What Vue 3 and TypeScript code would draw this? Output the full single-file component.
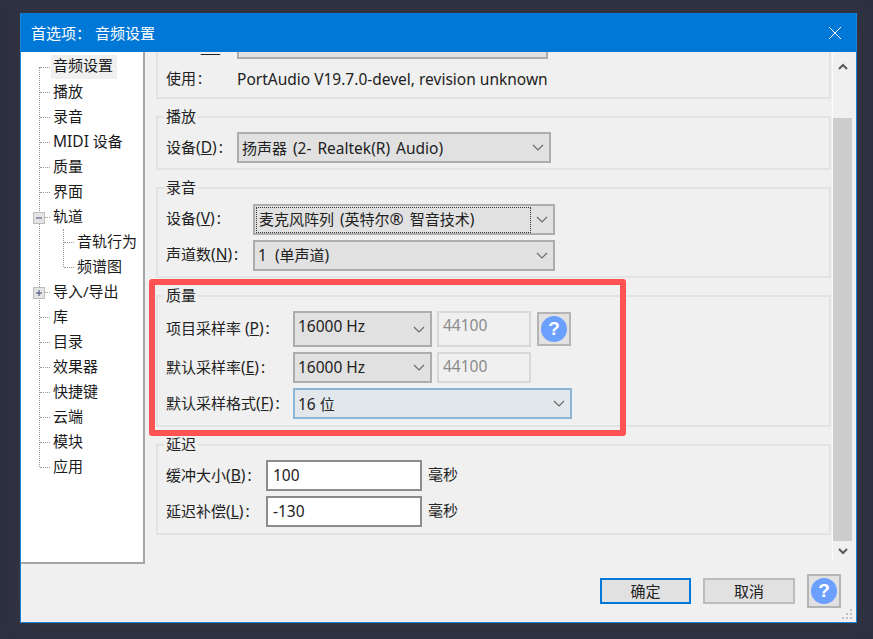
<script setup lang="ts">
interface TreeItem { label: string; level: number; expander?: string; selected?: boolean; latin?: boolean }
const items: TreeItem[] = [
  { label: '音频设置', level: 0, selected: true },
  { label: '播放', level: 0 },
  { label: '录音', level: 0 },
  { label: 'MIDI', level: 0, latin: true },
  { label: '质量', level: 0 },
  { label: '界面', level: 0 },
  { label: '轨道', level: 0, expander: 'minus' },
  { label: '音轨行为', level: 1 },
  { label: '频谱图', level: 1 },
  { label: '导入/导出', level: 0, expander: 'plus' },
  { label: '库', level: 0 },
  { label: '目录', level: 0 },
  { label: '效果器', level: 0 },
  { label: '快捷键', level: 0 },
  { label: '云端', level: 0 },
  { label: '模块', level: 0 },
  { label: '应用', level: 0 },
]
</script>

<template>
  <div class="page">
    <div class="window">
      <header class="titlebar">
        <span>首选项：&nbsp;音频设置</span>
        <svg class="close" width="14" height="14" viewBox="0 0 14 14"><path d="M1 1 13 13M13 1 1 13" stroke="#fff" stroke-width="1" fill="none" /></svg>
      </header>
      <div class="body">
        <nav class="tree">
          <i class="vline"></i>
          <i class="vline sub"></i>
          <div v-for="item in items" :key="item.label" class="row" :class="'lv' + item.level">
            <i class="hline"></i>
            <span v-if="item.expander" class="exp">
              <svg width="12" height="12" viewBox="0 0 12 12"><path :d="item.expander === 'plus' ? 'M3 6H9M6 3V9' : 'M3 6H9'" stroke="#3c4a7a" fill="none" /></svg>
            </span>
            <span class="lbl" :class="{ sel: item.selected }"><template v-if="item.latin"><span class="lat">{{ item.label }}</span>&nbsp;设备</template><template v-else>{{ item.label }}</template></span>
          </div>
        </nav>
        <div class="scrollview">
          <section class="group g1">
            <div class="line line-host">
              <label class="l1 host">主机<span class="lat">(<u>&nbsp;H&nbsp;</u>):</span></label>
              <div class="combo w311"></div>
            </div>
            <div class="line use">
              <label class="l1">使用<span class="lat colon">:</span></label>
              <span class="lat">PortAudio V19.7.0-devel, revision unknown</span>
            </div>
          </section>
          <section class="group g2">
            <span class="legend">播放</span>
            <div class="line">
              <label class="l1">设备<span class="lat">(<u>D</u>)<span class="colon">:</span></span></label>
              <div class="combo w314"><span class="ws">扬声器 <span class="lat">(2- Realtek(R) Audio)</span></span>
                <svg class="chev" width="12" height="7" viewBox="0 0 12 7"><path d="M1 1 6 6 11 1" /></svg>
              </div>
            </div>
          </section>
          <section class="group g3">
            <span class="legend">录音</span>
            <div class="line">
              <label class="l2">设备<span class="lat">(<u>V</u>)<span class="colon">:</span></span></label>
              <div class="combo w302 focus"><span class="focusbox ws">麦克风阵列 <span class="lat">(</span>英特尔<span class="mark">®</span> 智音技术<span class="lat">)</span></span>
                <svg class="chev" width="12" height="7" viewBox="0 0 12 7"><path d="M1 1 6 6 11 1" /></svg>
              </div>
            </div>
            <div class="line mt5">
              <label class="l2">声道数<span class="lat">(<u>N</u>)<span class="colon">:</span></span></label>
              <div class="combo w302"><span><span class="lat">1&nbsp; (</span>单声道<span class="lat">)</span></span>
                <svg class="chev" width="12" height="7" viewBox="0 0 12 7"><path d="M1 1 6 6 11 1" /></svg>
              </div>
            </div>
          </section>
          <section class="group g4">
            <span class="legend">质量</span>
            <div class="line">
              <label class="l3">项目采样率 <span class="lat">(<u>P</u>)<span class="colon">:</span></span></label>
              <div class="combo w139 tall"><span class="lat">16000 Hz</span>
                <svg class="chev" width="12" height="7" viewBox="0 0 12 7"><path d="M1 1 6 6 11 1" /></svg>
              </div>
              <div class="field disabled tall lat">44100</div>
              <button class="helpbtn small">
                <svg width="28" height="28" viewBox="0 0 28 28"><circle cx="14" cy="14" r="13" fill="#6ca0ff" /><text x="14" y="20" text-anchor="middle" class="q">?</text></svg>
              </button>
            </div>
            <div class="line mt5">
              <label class="l3">默认采样率<span class="lat">(<u>E</u>)<span class="colon">:</span></span></label>
              <div class="combo w139 up"><span class="lat">16000 Hz</span>
                <svg class="chev" width="12" height="7" viewBox="0 0 12 7"><path d="M1 1 6 6 11 1" /></svg>
              </div>
              <div class="field disabled lat">44100</div>
            </div>
            <div class="line mt5">
              <label class="l3">默认采样格式<span class="lat">(<u>F</u>)<span class="colon">:</span></span></label>
              <div class="combo w279 hover"><span><span class="lat">16</span> 位</span>
                <svg class="chev" width="12" height="7" viewBox="0 0 12 7"><path d="M1 1 6 6 11 1" /></svg>
              </div>
            </div>
          </section>
          <section class="group g5">
            <span class="legend">延迟</span>
            <div class="line">
              <label class="l4">缓冲大小<span class="lat">(<u>B</u>)<span class="colon">:</span></span></label>
              <div class="field input lat">100</div>
              <span class="unit">毫秒</span>
            </div>
            <div class="line mt5">
              <label class="l4">延迟补偿<span class="lat">(<u>L</u>)<span class="colon">:</span></span></label>
              <div class="field input lat">-130</div>
              <span class="unit">毫秒</span>
            </div>
          </section>
        </div>
        <aside class="scrollbar">
          <svg class="arrow" width="10" height="7" viewBox="0 0 10 7"><path d="M1 6 5 2 9 6" /></svg>
          <div class="thumb"></div>
          <svg class="arrow" width="10" height="7" viewBox="0 0 10 7"><path d="M1 1 5 5 9 1" /></svg>
        </aside>
      </div>
      <footer class="footer">
        <button class="btn primary">确定</button>
        <button class="btn">取消</button>
        <button class="helpbtn">
          <svg width="28" height="28" viewBox="0 0 28 28"><circle cx="14" cy="14" r="13" fill="#6ca0ff" /><text x="14" y="20" text-anchor="middle" class="q">?</text></svg>
        </button>
        <svg class="grip" width="11" height="11" viewBox="0 0 11 11"><path d="M8 0h2v2H8zM4 4h2v2H4zM8 4h2v2H8zM0 8h2v2H0zM4 8h2v2H4zM8 8h2v2H8z" fill="#c4c4c4" /></svg>
      </footer>
    </div>
    <div class="highlight"></div>
  </div>
</template>

<style>
html, body { margin: 0; background: #2e3140; overflow: hidden; }
</style>

<style scoped>
.page {
  position: relative;
  width: 873px;
  height: 639px;
  box-sizing: border-box;
  padding: 13px 16px 16px 20px;
  background: #2e3140;
  font-family: "Noto Sans", "Noto Sans CJK SC", sans-serif;
  font-size: 15px;
  color: #222;
}
.lat { font-size: 15.5px; }
.mark { font-size: 17px; }
.ws { word-spacing: 2px; }
.colon { margin-left: 2px; }
.window {
  position: relative;
  width: 837px;
  height: 610px;
  box-sizing: border-box;
  border: 1px solid #1a85d8;
  border-top: 0;
  background: #f0f0f0;
  display: flex;
  flex-direction: column;
  box-shadow: 0 0 16px rgba(60, 60, 70, 0.5);
}
.titlebar {
  height: 39px;
  flex: none;
  background: #0078d7;
  color: #fff;
  display: flex;
  align-items: center;
  justify-content: space-between;
  padding: 0 14px 0 10px;
}
.close { display: block; }
.body { display: flex; height: 510px; flex: none; }
.tree {
  position: relative;
  width: 124px;
  height: 512px;
  flex: none;
  box-sizing: border-box;
  background: #fff;
  border-right: 2px solid #a6a6a6;
  border-bottom: 2px solid #a6a6a6;
  padding-top: 1px;
  color: #1a1a1a;
}
.vline { position: absolute; left: 18px; top: 15px; height: 400px; border-left: 1px dotted #999; }
.vline.sub { left: 42px; top: 177px; height: 38px; }
.row { position: relative; height: 25px; display: flex; align-items: center; }
.row.lv0 { padding-left: 30px; }
.row.lv1 { padding-left: 54px; }
.hline { position: absolute; top: 14px; width: 10px; border-top: 1px dotted #999; }
.lv0 .hline { left: 19px; }
.lv1 .hline { left: 43px; }
.exp {
  position: absolute;
  left: 12px;
  top: 9px;
  width: 12px;
  height: 12px;
  background: #e4e4e4;
  box-shadow: inset 0 0 0 1px #bcbcbc;
  display: block;
}
.exp svg { display: block; }
.lbl { padding: 0 4px 0 2px; line-height: 24px; }
.lbl.sel { background: #f0f0f0; line-height: 21px; padding-bottom: 3px; margin-top: 3px; }
.scrollview {
  width: 687px;
  height: 510px;
  flex: none;
  overflow: hidden;
  box-sizing: border-box;
  padding-left: 11px;
}
.group {
  position: relative;
  width: 675px;
  box-sizing: border-box;
  border: 2px solid #e3e3e3;
  padding-left: 8px;
}
.legend {
  position: absolute;
  left: 6px;
  top: -12px;
  padding: 0 2px;
  line-height: 20px;
  background: #f0f0f0;
}
.g1 { margin-top: -31px; height: 78px; }
.line-host { height: 41px; align-items: flex-end; }
.l1.host { align-self: flex-end; padding-bottom: 13px; }
.l1.host u { text-underline-offset: 8px; }
.g2 { margin-top: 17px; height: 54px; padding-top: 14px; }
.g3 { margin-top: 17px; height: 91px; padding-top: 15px; }
.g4 { margin-top: 17px; height: 132px; padding-top: 14px; }
.g5 { margin-top: 17px; height: 91px; padding-top: 14px; }
.line { display: flex; align-items: center; }
.use { height: 30px; }
.mt5 { margin-top: 5px; }
label { flex: none; padding-bottom: 2px; box-sizing: border-box; }
.g3 label { padding-bottom: 4px; }
.l1 { width: 71px; }
.l2 { width: 87px; }
.l3 { width: 127px; }
.l4 { width: 100px; }
u { text-underline-offset: 1px; }
.combo {
  box-sizing: border-box;
  height: 31px;
  border: 2px solid #adadad;
  background: #e1e1e1;
  display: flex;
  align-items: center;
  justify-content: space-between;
  padding: 0 3px 0 3px;
  flex: none;
  color: #222;
}
.g3 .combo > span { padding-bottom: 2px; }
.combo.up > span { padding-bottom: 2px; }
.combo.tall { height: 36px; }
.combo.tall > span { padding-bottom: 6px; }
.w311 { width: 311px; }
.w314 { width: 314px; }
.w302 { width: 302px; }
.w139 { width: 139px; }
.w279 { width: 279px; }
.combo.hover { background: #e2e7ec; border-color: #8cb4d4; }
.combo.focus { padding-left: 2px; }
.g3 .combo > .focusbox {
  width: 273px;
  box-sizing: border-box;
  height: 24px;
  line-height: 21px;
  padding: 0 0 0 2px;
  outline: 1px dotted #333;
  outline-offset: 0;
}
.chev { flex: none; margin-right: 2px; }
.chev path { stroke: #6a6a6a; stroke-width: 1.2; fill: none; }
.field {
  box-sizing: border-box;
  flex: none;
  height: 31px;
  display: flex;
  align-items: center;
  padding-left: 5px;
}
.field.disabled {
  width: 94px;
  margin-left: 5px;
  border: 2px solid #d8d8d8;
  color: #8a8a8a;
  padding-left: 4px;
  padding-bottom: 4px;
}
.field.disabled.tall { height: 36px; padding-bottom: 8px; }
.field.input { width: 156px; height: 31px; background: #fff; border: 2px solid #8c8c8c; padding-bottom: 2px; }
.unit { margin-left: 6px; padding-bottom: 4px; }
.helpbtn {
  box-sizing: border-box;
  width: 34px;
  height: 34px;
  padding: 0;
  border: 2px solid #b4b4b4;
  background: #e1e1e1;
  display: flex;
  align-items: center;
  justify-content: center;
  flex: none;
}
.helpbtn.small { margin-left: 6px; }
.q { font: bold 19px "Liberation Sans", sans-serif; fill: #fff; }
.scrollbar {
  width: 20px;
  height: 510px;
  flex: none;
  box-sizing: border-box;
  border-left: 1px solid #fafafa;
  display: flex;
  flex-direction: column;
  align-items: center;
}
.arrow { display: block; flex: none; margin: 11px 0 0; }
.arrow path { stroke: #5a5a5a; stroke-width: 2; fill: none; }
.thumb { width: 19px; height: 423px; background: #cdcdcd; margin: 48px 0 7px; flex: none; }
.arrow:last-child { margin-top: 0; }
.footer {
  position: relative;
  flex: 1;
  display: flex;
  align-items: center;
  padding-left: 579px;
  padding-bottom: 3px;
}
.btn {
  box-sizing: border-box;
  width: 92px;
  height: 26px;
  padding: 0;
  font: inherit;
  color: #222;
  background: #e1e1e1;
  border: 2px solid #bcbcbc;
  margin-right: 12px;
}
.btn.primary { width: 91px; border-color: #0078d7; }
.grip { position: absolute; right: 3px; bottom: 2px; display: block; }
.highlight {
  position: absolute;
  left: 149px;
  top: 279px;
  width: 477px;
  height: 157px;
  box-sizing: border-box;
  border: 6px solid #ff5252;
  border-radius: 3px;
}
</style>
